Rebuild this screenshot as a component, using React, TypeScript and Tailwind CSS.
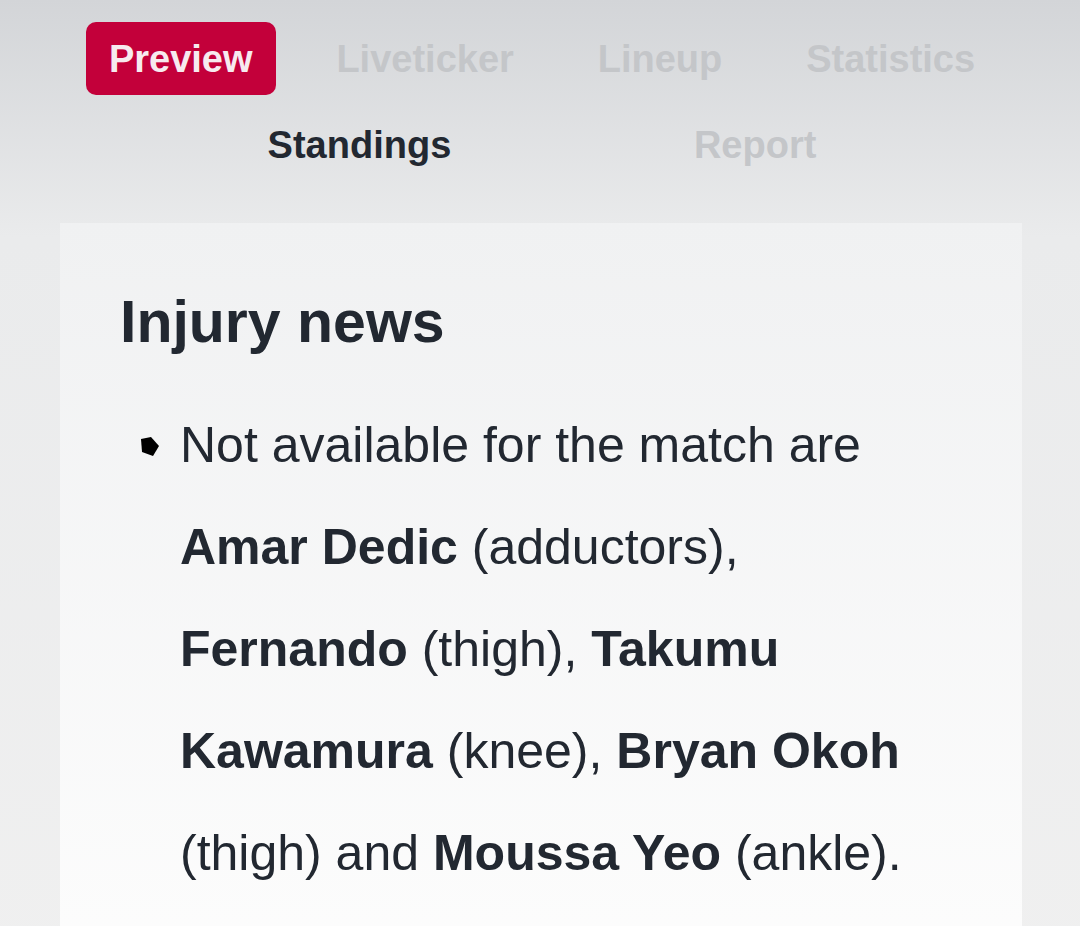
const tabs = [
  { label: 'Preview', state: 'active' },
  { label: 'Liveticker', state: 'muted' },
  { label: 'Lineup', state: 'muted' },
  { label: 'Statistics', state: 'muted' },
  { label: 'Standings', state: 'dark' },
  { label: 'Report', state: 'muted' },
];

function Tab({ label, state }: { label: string; state: string }) {
  const tone =
    state === 'active'
      ? 'bg-[#c3003a] text-[#f7eaef]'
      : state === 'dark'
        ? 'text-[#222831]'
        : 'text-[#c4c6c9]';
  return (
    <div className={`flex h-[73px] items-center rounded-[10px] px-[23px] text-[38px] font-bold leading-[44px] ${tone}`}>
      {label}
    </div>
  );
}

function Bullet() {
  return (
    <svg width="18" height="19" viewBox="0 0 18 19" className="block">
      <polygon points="0,2 10,0 18,9 12,19 1,15" fill="#000" />
    </svg>
  );
}

export default function App() {
  return (
    <div className="min-h-[926px] overflow-hidden bg-linear-to-b from-[#d3d5d8] via-[#eaebec] via-[24%] to-[#f0f0f0] font-['Liberation_Sans',Arial,sans-serif]">
      {/* Match tabs */}
      <nav className="flex flex-wrap justify-evenly gap-y-[13px] pl-[48px] pr-[44px] pt-[22px]">
        {tabs.map((t) => (
          <Tab key={t.label} label={t.label} state={t.state} />
        ))}
      </nav>

      {/* Injury news card */}
      <div className="ml-[60px] mt-[42px] w-[962px] bg-linear-to-b from-[#f0f1f2] to-[#fdfdfd] px-[60px] pb-[80px] pt-[65px] text-[#222831]">
        <h2 className="text-[59px] font-bold leading-[69px]">Injury news</h2>

        <div className="mt-[37px] flex pl-[20px]">
          <div className="w-[40px] shrink-0 pl-[1px] pt-[43px]">
            <Bullet />
          </div>
          <p className="text-[50px] leading-[102px]">
            Not available for the match are <b className="font-bold">Amar Dedic</b> (adductors),{' '}
            <b className="font-bold">Fernando</b> (thigh), <b className="font-bold">Takumu Kawamura</b> (knee),{' '}
            <b className="font-bold">Bryan Okoh</b> (thigh) and <b className="font-bold">Moussa Yeo</b> (ankle).
          </p>
        </div>
      </div>
    </div>
  );
}
